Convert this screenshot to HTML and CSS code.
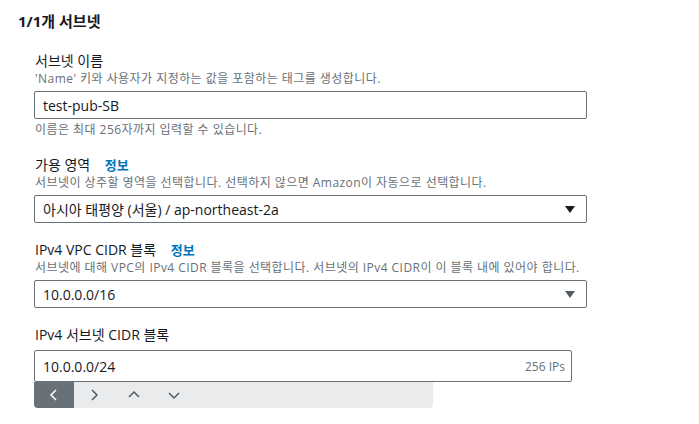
FILE: index.html
```html
<!DOCTYPE html>
<html lang="ko">
<head>
    <meta charset="UTF-8">
    <title>서브넷 설정</title>
    <link rel="stylesheet" href="styles.css">
</head>
<body>
    <h2 class="title">1/1개 서브넷</h2>
    <div class="form">
        <div class="field">
            <div class="label">서브넷 이름</div>
            <div class="desc">'Name' 키와 사용자가 지정하는 값을 포함하는 태그를 생성합니다.</div>
            <div class="input">test-pub-SB</div>
            <div class="hint">이름은 최대 256자까지 입력할 수 있습니다.</div>
        </div>

        <div class="field">
            <div class="label">가용 영역 <a class="info">정보</a></div>
            <div class="desc">서브넷이 상주할 영역을 선택합니다. 선택하지 않으면 Amazon이 자동으로 선택합니다.</div>
            <div class="input select">
                <span>아시아 태평양 (서울) / ap-northeast-2a</span>
                <span class="caret"></span>
            </div>
        </div>

        <div class="field">
            <div class="label">IPv4 VPC CIDR 블록 <a class="info">정보</a></div>
            <div class="desc">서브넷에 대해 VPC의 IPv4 CIDR 블록을 선택합니다. 서브넷의 IPv4 CIDR이 이 블록 내에 있어야 합니다.</div>
            <div class="input select">
                <span>10.0.0.0/16</span>
                <span class="caret gray"></span>
            </div>
        </div>

        <div class="field">
            <div class="label">IPv4 서브넷 CIDR 블록</div>
            <div class="input cidr">
                <span>10.0.0.0/24</span>
                <span class="count">256 IPs</span>
            </div>
            <div class="toolbar">
                <button class="tb active">
                    <svg width="10" height="12" viewBox="0 0 10 12"><polyline points="7,1 2,6 7,11"/></svg>
                </button>
                <button class="tb">
                    <svg width="10" height="12" viewBox="0 0 10 12"><polyline points="3,1 8,6 3,11"/></svg>
                </button>
                <button class="tb">
                    <svg width="12" height="10" viewBox="0 0 12 10"><polyline points="1,7 6,2 11,7"/></svg>
                </button>
                <button class="tb">
                    <svg width="12" height="10" viewBox="0 0 12 10"><polyline points="1,3 6,8 11,3"/></svg>
                </button>
            </div>
        </div>
    </div>
</body>
</html>
```

FILE: styles.css
```css
body {
    margin: 0;
    font-family: "Open Sans", "Noto Sans CJK KR", sans-serif;
    font-size: 14px;
    color: #16191f;
    background: #fff;
}
.title {
    margin: 0;
    padding: 11px 0 0 18px;
    font-size: 15px;
    line-height: 20px;
    font-weight: bold;
}
.form {
    padding: 20px 0 0 34px;
}
.field {
    margin-bottom: 17px;
}
.label {
    font-size: 14px;
    line-height: 20px;
    padding-left: 1px;
}
.info {
    margin-left: 11px;
    font-size: 13px;
    font-weight: bold;
    color: #0073bb;
}
.desc, .hint {
    font-size: 12px;
    line-height: 16px;
    letter-spacing: 0.45px;
    color: #687078;
    padding-left: 1px;
}
.desc {
    margin-bottom: 4px;
}
.hint {
    margin-top: 3px;
}
.input {
    width: 553px;
    height: 28px;
    box-sizing: border-box;
    border: 1px solid #687078;
    border-radius: 2px;
    padding: 0 11px 0 8px;
    display: flex;
    align-items: center;
    justify-content: space-between;
    font-size: 14px;
}
.caret {
    width: 0;
    height: 0;
    border-left: 5px solid transparent;
    border-right: 5px solid transparent;
    border-top: 7px solid #16191f;
}
.caret.gray {
    border-top-color: #545b64;
}
.cidr {
    width: 538px;
    height: 32px;
    margin-top: 5px;
    padding-right: 6px;
}
.count {
    font-size: 12px;
    color: #687078;
}
.toolbar {
    width: 399px;
    height: 26px;
    background: #e9ebed;
    border-radius: 0 0 4px 4px;
    display: flex;
}
.tb {
    width: 40px;
    height: 26px;
    border: none;
    padding: 0;
    background: transparent;
    display: flex;
    align-items: center;
    justify-content: center;
}
.tb svg polyline {
    fill: none;
    stroke: #545b64;
    stroke-width: 1.5;
}
.tb.active {
    background: #687078;
    border-bottom-left-radius: 4px;
}
.tb.active svg polyline {
    stroke: #fff;
}
```
